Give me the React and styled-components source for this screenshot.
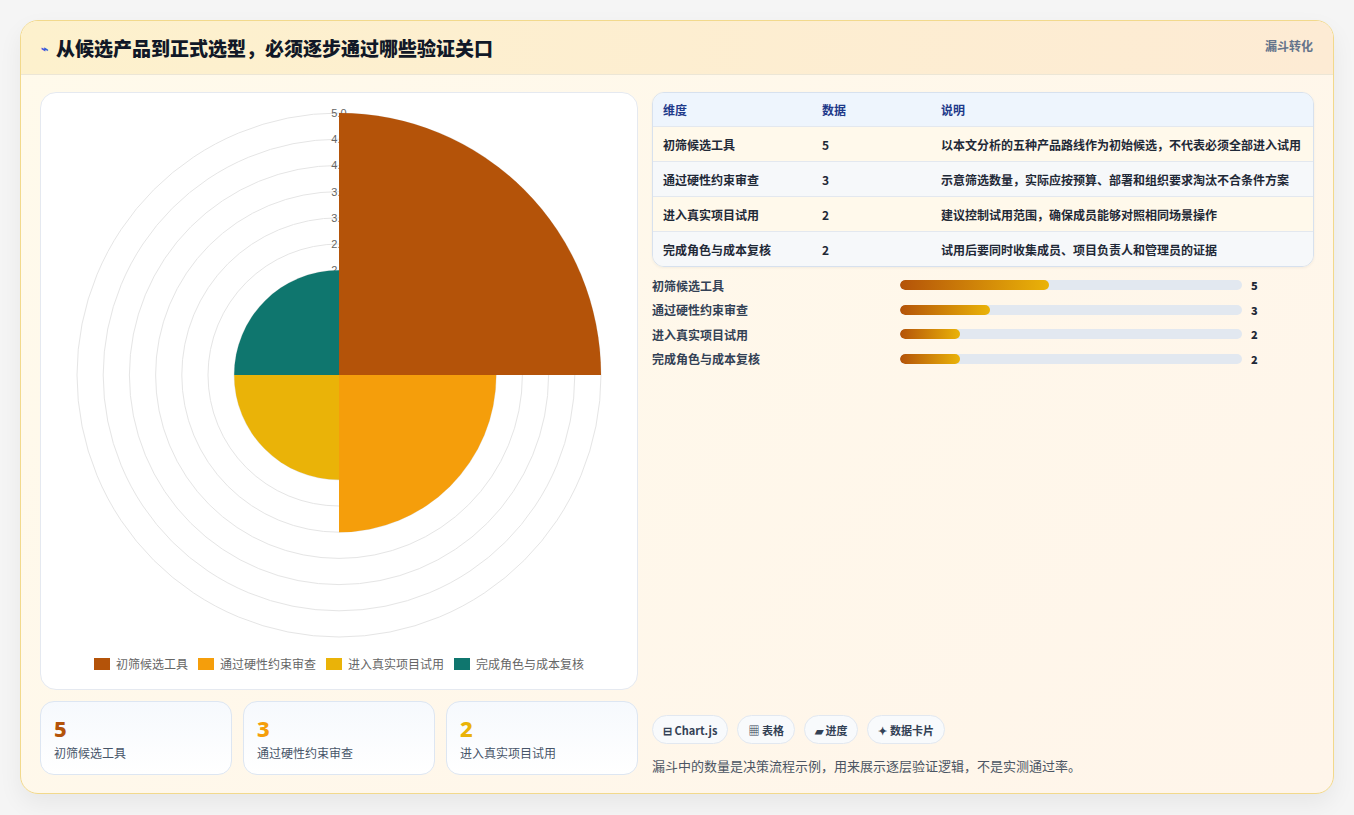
import React from "react";
import styled, { createGlobalStyle } from "styled-components";

const Global = createGlobalStyle`
  body { margin: 0; background: #f5f5f5; font-family: "Noto Sans CJK SC", "Noto Sans", sans-serif; }
  * { box-sizing: border-box; }
`;

const Page = styled.div`
  padding: 20px 20px 21px 20px;
  width: 1354px;
`;
const Card = styled.div`
  width: 1314px;
  height: 774px;
  border: 1px solid #f2d98c;
  border-radius: 18px;
  background: linear-gradient(135deg, #fffaeb, #fff5ea);
  box-shadow: 0 10px 24px rgba(0,0,0,0.06);
  overflow: hidden;
  display: flex;
  flex-direction: column;
`;
const Header = styled.div`
  height: 55px;
  display: flex;
  align-items: center;
  justify-content: space-between;
  padding: 0 20px 0 20px;
  background: linear-gradient(90deg, #fdf1cd, #fdebd4);
  border-bottom: 1px solid #ece6d6;
`;
const Title = styled.h1`
  margin: 0;
  font-size: 19px;
  font-weight: 800;
  color: #111827;
  display: flex;
  align-items: center;
  gap: 8px;
`;
const Bolt = styled.span`
  color: #3b5bdb;
  font-size: 12px;
`;
const Tag = styled.span`
  align-self: flex-start;
  margin-top: 16px;
  font-size: 12px;
  font-weight: 700;
  color: #64748b;
`;
const Body = styled.div`
  flex: 1;
  display: grid;
  grid-template-columns: 598px 1fr;
  gap: 14px;
  padding: 17px 19px 18px 19px;
`;
const LeftCol = styled.div`
  display: flex;
  flex-direction: column;
  gap: 11px;
`;
const ChartPanel = styled.div`
  height: 598px;
  background: #fff;
  border: 1px solid #e5e9f0;
  border-radius: 16px;
  display: flex;
  flex-direction: column;
  align-items: center;
`;
const Legend = styled.div`
  display: flex;
  gap: 10px;
  margin-top: 17px;
  font-size: 12px;
  color: #666;
`;
const LegendItem = styled.span`
  display: flex;
  align-items: center;
  gap: 6px;
  &::before {
    content: "";
    width: 16px;
    height: 12px;
    background: ${p => p.c};
  }
`;
const Stats = styled.div`
  display: grid;
  grid-template-columns: repeat(3, 1fr);
  gap: 11px;
`;
const Stat = styled.div`
  height: 74px;
  border: 1px solid #dde6f2;
  border-radius: 14px;
  background: linear-gradient(180deg, #f6f9fd, #ffffff);
  padding: 12px 13px;
`;
const StatNum = styled.div`
  font-size: 22px;
  font-weight: 800;
  color: ${p => p.c};
  line-height: 28px;
  font-family: "Noto Sans", sans-serif;
`;
const StatLabel = styled.div`
  font-size: 12px;
  color: #475569;
  margin-top: 2px;
`;
const RightCol = styled.div`
  display: flex;
  flex-direction: column;
`;
const Table = styled.div`
  border: 1px solid #d7e1ee;
  border-radius: 12px;
  overflow: hidden;
  box-shadow: 0 1px 3px rgba(0,0,0,0.05);
`;
const Row = styled.div`
  display: grid;
  grid-template-columns: 159px 119px 1fr;
  height: ${p => (p.head ? 33 : 35)}px;
  align-items: center;
  padding-left: 10px;
  font-size: 12px;
  font-weight: 600;
  color: ${p => (p.head ? "#1e3a8a" : "#1f2937")};
  background: ${p => (p.head ? "#eef5fd" : p.alt ? "#f6f8fa" : "#fff9eb")};
  border-top: ${p => (p.head ? "none" : "1px solid #e3e8ef")};
  white-space: nowrap;
`;
const Bars = styled.div`
  margin-top: 9px;
  display: flex;
  flex-direction: column;
  gap: 6px;
`;
const BarRow = styled.div`
  display: grid;
  grid-template-columns: 248px 342px 1fr;
  align-items: center;
  height: 18.5px;
  font-size: 12px;
  font-weight: 600;
  color: #334155;
`;
const Track = styled.div`
  height: 10px;
  border-radius: 5px;
  background: #e2e8f0;
  overflow: hidden;
`;
const Fill = styled.div`
  height: 100%;
  border-radius: 5px;
  background: linear-gradient(90deg, #b45309, #eab308);
`;
const BarVal = styled.span`
  padding-left: 9px;
  font-size: 11px;
  font-weight: 800;
  color: #1f2937;
`;
const Chips = styled.div`
  margin-top: auto;
  display: flex;
  gap: 9px;
`;
const Chip = styled.span`
  height: 29px;
  padding: 0 10px;
  border: 1px solid #e2e8f0;
  border-radius: 15px;
  background: #f8fafc;
  font-size: 11px;
  font-weight: 700;
  color: #334155;
  display: flex;
  align-items: center;
  gap: 3px;
`;
const Note = styled.p`
  margin: 12px 0 0;
  font-size: 13px;
  color: #4b5563;
`;

const C = ["#b45309", "#f59e0b", "#eab308", "#0f766e"];
const rows = [
  ["初筛候选工具", 5, "以本文分析的五种产品路线作为初始候选，不代表必须全部进入试用", 43.5],
  ["通过硬性约束审查", 3, "示意筛选数量，实际应按预算、部署和组织要求淘汰不合条件方案", 26.3],
  ["进入真实项目试用", 2, "建议控制试用范围，确保成员能够对照相同场景操作", 17.5],
  ["完成角色与成本复核", 2, "试用后要同时收集成员、项目负责人和管理员的证据", 17.5],
];

function Polar() {
  const cx = 298, cy = 282, R = 262;
  const rings = Array.from({ length: 10 }, (_, i) => ((i + 1) * R) / 10);
  const labels = ["5.0", "4.5", "4.0", "3.5", "3.0", "2.5", "2.0"];
  const sector = (v, a0, a1, fill) => {
    const r = (v / 5) * R;
    const p = a => [cx + r * Math.sin(a), cy - r * Math.cos(a)];
    const [x0, y0] = p(a0), [x1, y1] = p(a1);
    return <path d={`M${cx},${cy} L${x0},${y0} A${r},${r} 0 0 1 ${x1},${y1} Z`} fill={fill} />;
  };
  const q = Math.PI / 2;
  return (
    <svg width="597" height="545" viewBox="0 0 597 545">
      {rings.map(r => <circle key={r} cx={cx} cy={cy} r={r} fill="none" stroke="#e5e5e5" strokeWidth="1" />)}
      {labels.map((l, i) => (
        <text key={l} x={cx} y={cy - R + i * 26.2 + 4} fontSize="11" fill="#666" textAnchor="middle" fontFamily="Liberation Sans, sans-serif">{l}</text>
      ))}
      {sector(5, 0, q, C[0])}
      {sector(3, q, 2 * q, C[1])}
      {sector(2, 2 * q, 3 * q, C[2])}
      {sector(2, 3 * q, 4 * q, C[3])}
    </svg>
  );
}

export default function App() {
  return (
    <Page>
      <Global />
      <Card>
        <Header>
          <Title><Bolt>⌁</Bolt>从候选产品到正式选型，必须逐步通过哪些验证关口</Title>
          <Tag>漏斗转化</Tag>
        </Header>
        <Body>
          <LeftCol>
            <ChartPanel>
              <Polar />
              <Legend>
                {rows.map((r, i) => <LegendItem key={i} c={C[i]}>{r[0]}</LegendItem>)}
              </Legend>
            </ChartPanel>
            <Stats>
              {rows.slice(0, 3).map((r, i) => (
                <Stat key={i}>
                  <StatNum c={C[i]}>{r[1]}</StatNum>
                  <StatLabel>{r[0]}</StatLabel>
                </Stat>
              ))}
            </Stats>
          </LeftCol>
          <RightCol>
            <Table>
              <Row head><span>维度</span><span>数据</span><span>说明</span></Row>
              {rows.map((r, i) => (
                <Row key={i} alt={i % 2 === 1}><span>{r[0]}</span><span>{r[1]}</span><span>{r[2]}</span></Row>
              ))}
            </Table>
            <Bars>
              {rows.map((r, i) => (
                <BarRow key={i}>
                  <span>{r[0]}</span>
                  <Track><Fill style={{ width: `${r[3]}%` }} /></Track>
                  <BarVal>{r[1]}</BarVal>
                </BarRow>
              ))}
            </Bars>
            <Chips>
              <Chip>⊟ Chart.js</Chip>
              <Chip>▦ 表格</Chip>
              <Chip>▰ 进度</Chip>
              <Chip>✦ 数据卡片</Chip>
            </Chips>
            <Note>漏斗中的数量是决策流程示例，用来展示逐层验证逻辑，不是实测通过率。</Note>
          </RightCol>
        </Body>
      </Card>
    </Page>
  );
}
